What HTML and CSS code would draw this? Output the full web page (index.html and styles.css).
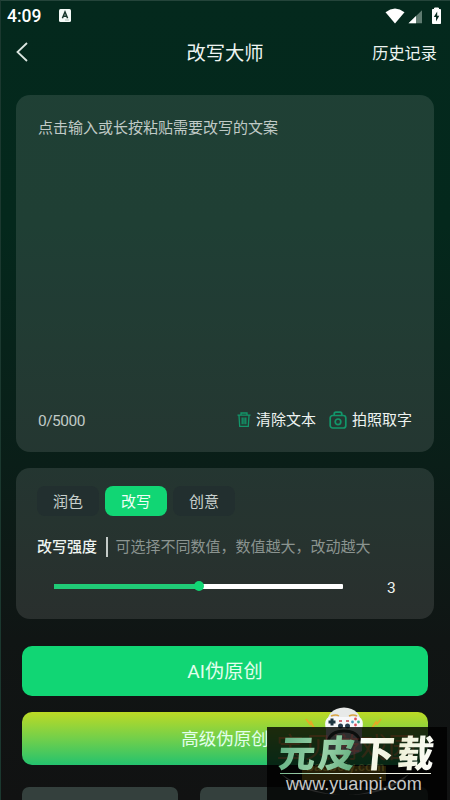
FILE: index.html
```html
<!DOCTYPE html>
<html lang="zh-CN">
<head>
<meta charset="utf-8">
<title>改写大师</title>
<link rel="stylesheet" href="styles.css">
</head>
<body>
<div class="screen">
  <div class="status">
    <span class="clock">4:09</span>
    <svg class="app-badge" width="12" height="13" viewBox="0 0 12 13"><rect width="12" height="13" rx="1.5" fill="#f4faf7"/><path d="M3.4 9.2 6 3l2.6 6.2M4.4 7.3h3.2" fill="none" stroke="#17352b" stroke-width="1.5"/><path d="M6 11h4" stroke="#9cb0a8" stroke-width=".8"/></svg>
    <svg class="signals" width="58" height="18" viewBox="0 0 58 18">
      <path d="M.5 5.200Q10 -2.200 19.500 5.200L10 16.500Z" fill="#fff"/>
      <path d="M23.500 16.200 37 3.200V16.200Z" fill="#5f7b70"/>
      <path d="M23.500 16.200 31 9V16.200Z" fill="#fff"/>
      <path d="M47.500 2.500h2V1h4v1.500h2V16.500h-8Z" fill="#fff" stroke="#fff" stroke-linejoin="round"/>
      <path d="M52.200 4.500 48.800 10h2.200v4.500L54.300 8.700h-2.100Z" fill="#082b20"/>
    </svg>
  </div>
  <header class="navbar">
    <svg class="back" width="14" height="22" viewBox="0 0 14 22"><path d="M12 2 2.500 11 12 20" fill="none" stroke="#dce6e1" stroke-width="1.800"/></svg>
    <h1>改写大师</h1>
    <span class="history">历史记录</span>
  </header>

  <section class="card editor">
    <p class="placeholder">点击输入或长按粘贴需要改写的文案</p>
    <div class="editor-foot">
      <span class="count">0/5000</span>
      <svg class="trash" width="14" height="16" viewBox="0 0 14 16" fill="none" stroke="#12966a" stroke-width="1.300"><path d="M.5 3.200h13M4 3V1h6v2M2 3.500l.7 10.800h8.600L12 3.500M5.200 5.500v6.800M7 5.500v6.800M8.800 5.500v6.800"/></svg>
      <span class="action">清除文本</span>
      <svg class="camera" width="18" height="18" viewBox="0 0 18 18" fill="none" stroke="#12966a" stroke-width="1.700"><rect x="1.200" y="4.500" width="15.600" height="12.500" rx="2.500"/><path d="M5.200 4.300V3q0-1.800 1.800-1.800h4q1.800 0 1.800 1.800v1.300"/><circle cx="9" cy="10.800" r="2.800"/></svg>
      <span class="action">拍照取字</span>
    </div>
  </section>

  <section class="card options">
    <div class="tabs">
      <span class="tab">润色</span><span class="tab active">改写</span><span class="tab">创意</span>
    </div>
    <div class="strength"><b>改写强度</b><i class="divider"></i><span>可选择不同数值，数值越大，改动越大</span></div>
    <div class="slider-row">
      <div class="track"><div class="filled"></div><div class="thumb"></div></div>
      <span class="value">3</span>
    </div>
  </section>

  <div class="button primary">AI伪原创</div>
  <div class="button premium">高级伪原创</div>
  <div class="tiles"><div class="tile"></div><div class="tile"></div></div>

  <div class="watermark">
    <svg class="mascot" width="180" height="94" viewBox="0 0 180 94">
      <path d="M14 67Q78 109 142 67Q125 88 78 88Q35 88 14 67" fill="#c8cdca"/>
      <path d="M59 20Q60 1 77 .5Q94 1 95 20V44Q77 54 59 44Z" fill="#e7e9e8"/>
      <path d="M61 34Q64 24 77 24T93 34" fill="none" stroke="#3c4543" stroke-width="3"/>
      <path d="M64 9q5-2 8 0M82 9q4-2 8 0" stroke="#d9a441" stroke-width="1.500" fill="none"/>
      <path d="M62 10h30q5 2 3.500 11H58.500Q57 12 62 10Z" fill="#f7f8fa"/>
      <path d="M65 11.500v7M61.500 15h7" stroke="#1e3540" stroke-width="3"/>
      <circle cx="73.500" cy="19" r="2.500" fill="#263b4b"/><circle cx="80.500" cy="19" r="2.500" fill="#263b4b"/>
      <path d="M72 14h3M79 14h3" stroke="#c5404d" stroke-width="1.500"/>
      <circle cx="88.500" cy="12" r="1.400" fill="#db4d58"/><circle cx="88.500" cy="18" r="1.400" fill="#db4d58"/><circle cx="85.500" cy="15" r="1.400" fill="#4f9abd"/><circle cx="91.500" cy="15" r="1.400" fill="#38ad91"/>
      <path d="M39 12l4 5 1-2 3 6M114 12l-4 5-1-2-4 6" fill="none" stroke="#e6a925" stroke-width="1.800"/>
      <rect x="35" y="59" width="84" height="15" fill="#b99a24"/>
    </svg>
    <div class="plate">
      <span class="ghost">宝贝游戏园</span>
      <span class="ghost-url">baobeiy.com</span>
      <div class="brand"><span class="mint">元皮</span><span class="cream">下载</span></div>
      <div class="rule"></div>
      <div class="site">www.yuanpi.com</div>
    </div>
  </div>
</div>
</body>
</html>
```
FILE: styles.css
```css
* { box-sizing: border-box; }
body {
  margin: 0;
  font-family: Roboto, "Noto Sans CJK SC", sans-serif;
  color: #eef4f1;
}
.screen {
  position: relative;
  width: 450px;
  height: 800px;
  overflow: hidden;
  background: linear-gradient(#04291d 0%, #04281c 28%, #0a1e18 58%, #101514 80%, #111212 100%);
  border-top: 1px solid #24443a;
  border-left: 1px solid #1b382f;
}
.status {
  height: 29px;
  display: flex;
  align-items: center;
  padding: 0 7px 0 6px;
}
.clock { font-size: 17.500px; font-weight: 500; color: #fff; width: 52px; line-height: 29px; padding-top: 1px; }
.signals { margin-left: auto; }
.navbar {
  height: 44px;
  display: grid;
  grid-template-columns: 100px 1fr 100px;
  align-items: center;
  padding: 0 13px 0 14px;
}
.navbar h1 { margin: 0; padding: 4px 2px 0 0; font-size: 19.300px; font-weight: 400; text-align: center; line-height: 28px; }
.history { font-size: 16.200px; text-align: right; white-space: nowrap; }
.card {
  margin-left: 15px;
  width: 418px;
  border-radius: 14px;
  background: rgba(255, 255, 255, .11);
}
.editor {
  margin-top: 21px;
  height: 357px;
  padding: 22px 22px 20px;
  display: flex;
  flex-direction: column;
  justify-content: space-between;
}
.placeholder { margin: 0; font-size: 15px; line-height: 22px; color: #c0cac6; }
.editor-foot { display: flex; align-items: center; height: 24px; font-size: 15px; }
.action { line-height: 22px; }
.count { font-size: 15.500px; letter-spacing: -.5px; color: #c0cac6; margin-right: auto; padding-top: 1px; }
.trash { margin-right: 5px; }
.camera { margin: 0 5px 0 13px; }
.options { margin-top: 16px; height: 151px; padding: 18px 21px 0; }
.tabs { display: flex; gap: 6px; }
.tab {
  width: 62px;
  height: 30px;
  border-radius: 8px;
  background: #222f2f;
  color: #c7cfcc;
  font-size: 15px;
  line-height: 32px;
  text-align: center;
}
.tab.active { background: #11d674; color: #effff6; }
.strength {
  display: flex;
  align-items: center;
  height: 22px;
  margin-top: 20px;
  font-size: 15px;
  line-height: 22px;
  white-space: nowrap;
}
.strength b { font-weight: 500; }
.divider { width: 1.500px; height: 20px; margin: 0 8px 0 9px; background: #c4cbc8; }
.strength span { color: #8b9490; }
.slider-row { display: flex; align-items: center; height: 24px; margin: 16px 0 0 17px; }
.track {
  display: flex;
  align-items: center;
  width: 289px;
  height: 5px;
  border-radius: 1px;
  background: #fff;
}
.filled { width: 141px; height: 5px; background: #20cb77; }
.thumb { flex: none; width: 10px; height: 10px; margin-left: -1px; border-radius: 50%; background: #11d674; }
.value { margin-left: 44px; font-size: 15.500px; line-height: 24px; padding-top: 3px; }
.button {
  width: 406px;
  margin-left: 21px;
  border-radius: 10px;
  text-align: center;
  color: #e2ffec;
}
.primary { margin-top: 27px; height: 50px; line-height: 52px; font-size: 19.200px; background: #11d674; }
.premium { margin-top: 16px; height: 53px; line-height: 54px; font-size: 17.500px; background: linear-gradient(#bdda25, #6fcf4c 52%, #24c26e); }
.tiles { display: flex; gap: 22px; margin: 22px 0 0 21px; }
.tile { width: 156px; height: 50px; border-radius: 7px; background: #34403d; }
.tile + .tile { width: 228px; }
.watermark { position: absolute; left: 266px; top: 706px; width: 180px; height: 93px; }
.mascot { display: block; }
.plate {
  position: absolute;
  left: 0;
  top: 20px;
  width: 180px;
  height: 73px;
  background: rgba(0, 0, 0, .8);
}
.brand {
  position: relative;
  font-family: "Noto Sans CJK SC", sans-serif;
  font-size: 37px;
  font-weight: 900;
  line-height: 34px;
  height: 45px;
  padding: 7px 0 0 12px;
  letter-spacing: 2.500px;
  white-space: nowrap;
  transform: skewX(-5deg);
}
.mint, .cream { background-clip: text; -webkit-background-clip: text; color: transparent; }
.mint { background-image: linear-gradient(100deg, #5eae80, #9bd3aa 55%, #58a776); }
.cream { background-image: linear-gradient(100deg, #fff, #edf0d5 50%, #fff); }
.rule { width: 151px; height: 1px; margin: 1px 0 0 13px; background: linear-gradient(90deg, #79b88f, #f1f3e6 50%); }
.site {
  font-family: "Liberation Sans", sans-serif;
  font-size: 18.100px;
  line-height: 21px;
  margin-left: 19px;
  color: #c6c8c7;
}
.ghost {
  position: absolute;
  left: 9px;
  top: 6px;
  font-size: 28px;
  line-height: 32px;
  color: rgba(170, 40, 30, .22);
  white-space: nowrap;
}
.ghost-url { position: absolute; left: 39px; top: 33px; font: 700 13px/14px "Liberation Sans", sans-serif; color: rgba(200, 180, 90, .2); }
```
